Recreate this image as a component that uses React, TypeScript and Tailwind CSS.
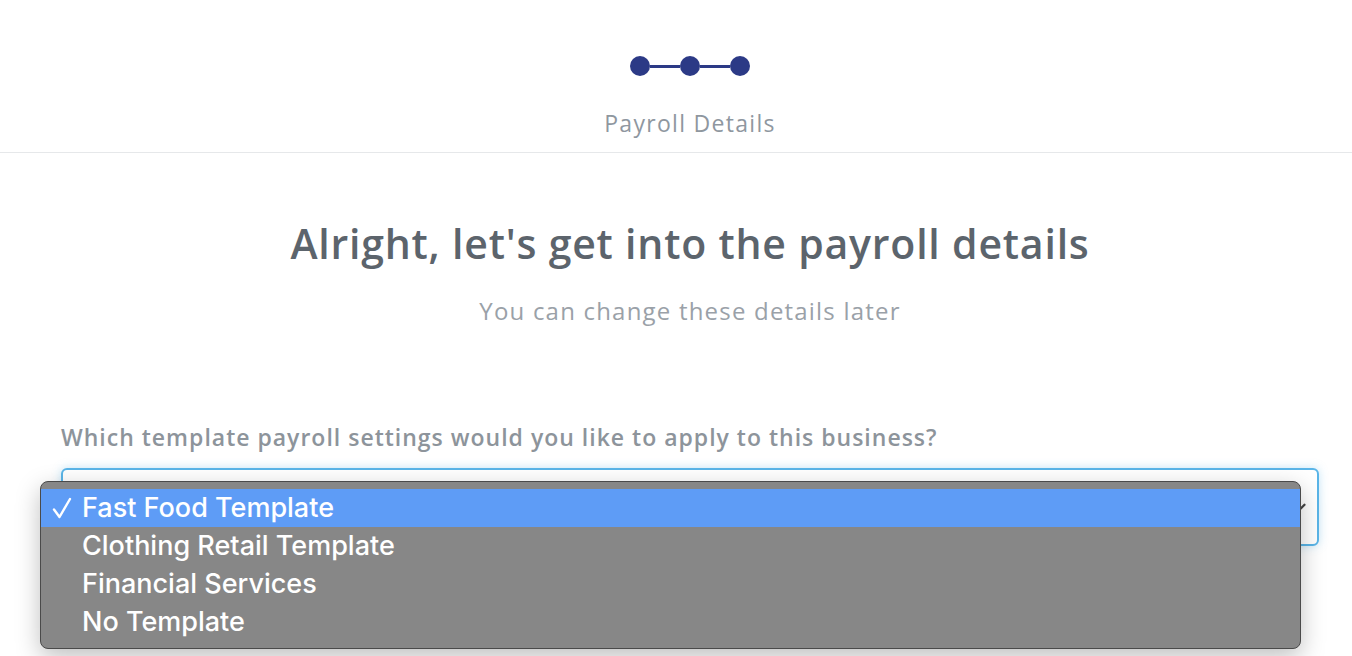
import { ChevronDown } from "lucide-react";

const options = [
  "Fast Food Template",
  "Clothing Retail Template",
  "Financial Services",
  "No Template",
];

export default function App() {
  return (
    <div className="min-h-screen bg-white font-['Open_Sans',sans-serif]">
      {/* Stepper header */}
      <div className="border-b border-[#e6e8ea] pl-[28px]">
        <div className="flex flex-col items-center pt-[56px] pb-[13px]">
          <div className="flex items-center">
            <div className="w-[20px] h-[20px] rounded-full bg-[#2c3a86]" />
            <div className="w-[30px] h-[3px] bg-[#2c3a86]" />
            <div className="w-[20px] h-[20px] rounded-full bg-[#2c3a86]" />
            <div className="w-[30px] h-[3px] bg-[#2c3a86]" />
            <div className="w-[20px] h-[20px] rounded-full bg-[#2c3a86]" />
          </div>
          <p className="mt-[31px] text-[23px] leading-[32px] tracking-[1.3px] text-[#8f979f]">
            Payroll Details
          </p>
        </div>
      </div>

      {/* Body */}
      <div className="pl-[61px] pr-[33px]">
        <h1 className="mt-[64px] text-center text-[41px] leading-[52px] tracking-[0.8px] font-semibold text-[#5c646c]">
          Alright, let's get into the payroll details
        </h1>
        <p className="mt-[26px] text-center text-[24px] leading-[32px] tracking-[1.2px] text-[#9aa1a8]">
          You can change these details later
        </p>

        <label className="block mt-[95px] text-[23px] leading-[30px] tracking-[1px] font-semibold text-[#8d949b]">
          Which template payroll settings would you like to apply to this business?
        </label>

        <div className="relative mt-[16px]">
          <div className="h-[78px] rounded-[6px] border-2 border-[#5ab5e8] shadow-[0_0_10px_rgba(90,181,232,0.35)] bg-white flex items-center justify-end pr-[8px]">
            <ChevronDown className="w-[18px] h-[18px] text-[#444]" strokeWidth={3} />
          </div>

          {/* Native-like option menu */}
          <div className="absolute left-[-21px] top-[13px] w-[1261px] rounded-[8px] border border-[#4a4a4a] bg-[#878787] py-[7px] shadow-[0_8px_24px_rgba(0,0,0,0.25)] font-['Inter',sans-serif]">
            {options.map((o, i) => (
              <div
                key={o}
                className={`h-[38px] flex items-center text-white text-[27px] font-medium ${
                  i === 0 ? "bg-[#5e9cf6]" : ""
                }`}
              >
                <span className="w-[41px] pl-[11px] flex items-center">
                  {i === 0 && (
                    <svg width="20" height="22" viewBox="0 0 20 22" fill="none">
                      <path
                        d="M2 12.5 L7.5 20 L18 2"
                        stroke="white"
                        strokeWidth="2.4"
                        strokeLinecap="round"
                        strokeLinejoin="round"
                      />
                    </svg>
                  )}
                </span>
                <span>{o}</span>
              </div>
            ))}
          </div>
        </div>
      </div>
    </div>
  );
}
